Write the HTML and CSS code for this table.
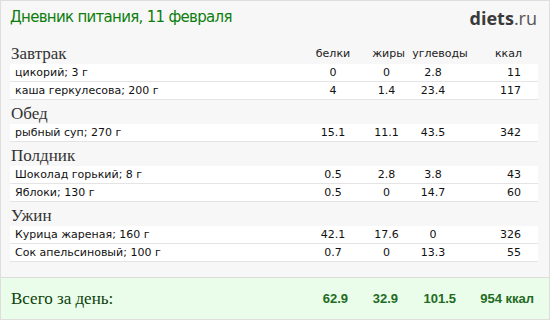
FILE: index.html
```html
<!DOCTYPE html>
<html lang="ru">
<head>
<meta charset="utf-8">
<title>Дневник питания</title>
<link rel="stylesheet" href="styles.css">
</head>
<body>
<div class="page">
  <header class="top">
    <h1 class="title">Дневник питания, 11 февраля</h1>
    <div class="logo"><b>diets</b>.ru</div>
  </header>
  <main class="meals">
    <section class="meal">
      <div class="meal-head">
        <h2 class="meal-name">Завтрак</h2>
        <div class="labels"><span class="l-b">белки</span><span class="l-f">жиры</span><span class="l-c">углеводы</span><span class="l-k">ккал</span></div>
      </div>
      <div class="row"><span class="name">цикорий; 3 г</span><span class="c-b">0</span><span class="c-f">0</span><span class="c-c">2.8</span><span class="c-k">11</span></div>
      <div class="row"><span class="name">каша геркулесова; 200 г</span><span class="c-b">4</span><span class="c-f">1.4</span><span class="c-c">23.4</span><span class="c-k">117</span></div>
    </section>
    <section class="meal">
      <div class="meal-head"><h2 class="meal-name">Обед</h2></div>
      <div class="row"><span class="name">рыбный суп; 270 г</span><span class="c-b">15.1</span><span class="c-f">11.1</span><span class="c-c">43.5</span><span class="c-k">342</span></div>
    </section>
    <section class="meal">
      <div class="meal-head"><h2 class="meal-name">Полдник</h2></div>
      <div class="row"><span class="name">Шоколад горький; 8 г</span><span class="c-b">0.5</span><span class="c-f">2.8</span><span class="c-c">3.8</span><span class="c-k">43</span></div>
      <div class="row"><span class="name">Яблоки; 130 г</span><span class="c-b">0.5</span><span class="c-f">0</span><span class="c-c">14.7</span><span class="c-k">60</span></div>
    </section>
    <section class="meal">
      <div class="meal-head"><h2 class="meal-name">Ужин</h2></div>
      <div class="row"><span class="name">Курица жареная; 160 г</span><span class="c-b">42.1</span><span class="c-f">17.6</span><span class="c-c">0</span><span class="c-k">326</span></div>
      <div class="row"><span class="name">Сок апельсиновый; 100 г</span><span class="c-b">0.7</span><span class="c-f">0</span><span class="c-c">13.3</span><span class="c-k">55</span></div>
    </section>
  </main>
  <footer class="total">
    <span class="total-label">Всего за день:</span>
    <span class="t-b">62.9</span><span class="t-f">32.9</span><span class="t-c">101.5</span><span class="t-k">954 ккал</span>
  </footer>
</div>
</body>
</html>
```

FILE: styles.css
```css
html, body {
  margin: 0;
  padding: 0;
  background: #ffffff;
}

body {
  font-family: "DejaVu Sans", Verdana, sans-serif;
}

.page {
  width: 550px;
  height: 320px;
  box-sizing: border-box;
  border: 1px solid #dedede;
  background: #f7f7f7;
  display: flex;
  flex-direction: column;
}

.top {
  height: 39px;
  display: flex;
  justify-content: space-between;
  align-items: flex-start;
  padding: 0 12px 0 9px;
}

.title {
  margin: 7px 0 0;
  font-size: 15px;
  letter-spacing: -0.7px;
  font-weight: normal;
  color: #0d7d0d;
  line-height: 18px;
}

.logo {
  margin-top: 7px;
  font-family: "Open Sans", "DejaVu Sans", sans-serif;
  font-size: 18px;
  line-height: 20px;
  color: #555555;
}

.logo b {
  color: #3a3a3a;
  font-weight: bold;
}

.meals {
  flex: 1;
  padding: 0 11px 0 9px;
}

.meal-head {
  height: 24px;
  display: flex;
  align-items: flex-end;
  justify-content: space-between;
}

.meal-name {
  margin: 0 0 1px 1px;
  font-family: "Liberation Serif", "Times New Roman", serif;
  font-weight: normal;
  font-size: 17px;
  line-height: 18px;
  color: #333333;
}

.labels {
  display: flex;
  font-size: 11px;
  line-height: 14px;
  color: #222222;
  margin-bottom: 3px;
}

.labels span {
  text-align: center;
}

.l-b { width: 60px; margin-right: 2px; }
.l-f { width: 47px; }
.l-c { width: 56px; }
.l-k { width: 70px; text-align: right !important; padding-right: 16px; box-sizing: border-box; }

.row {
  height: 17px;
  border-bottom: 1px solid #e4e4e4;
  background: #ffffff;
  display: flex;
  align-items: center;
  font-size: 11px;
  color: #111111;
  padding-left: 5px;
}

.name {
  flex: 1;
}

.c-b { width: 60px; text-align: center; }
.c-f { width: 47px; text-align: center; }
.c-c { width: 46px; text-align: center; }
.c-k { width: 65px; text-align: right; padding-right: 17px; }

.total {
  height: 41px;
  border-top: 1px solid #dcdcdc;
  background: #eafdea;
  display: flex;
  align-items: center;
  padding-left: 10px;
  font-family: "Liberation Sans", Arial, sans-serif;
  font-weight: bold;
  font-size: 13px;
  color: #226b22;
}

.total-label {
  flex: 1;
  font-family: "Liberation Serif", "Times New Roman", serif;
  font-weight: normal;
  font-size: 17px;
  color: #0a3f0a;
}

.t-b { width: 50px; text-align: right; }
.t-f { width: 50px; text-align: right; }
.t-c { width: 58px; text-align: right; }
.t-k { width: 78px; text-align: right; padding-right: 15px; }
```
